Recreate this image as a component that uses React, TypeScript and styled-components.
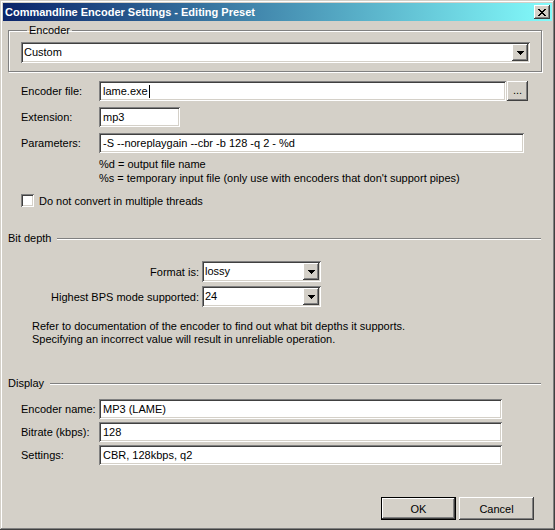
import React from 'react';
import styled, { createGlobalStyle, css } from 'styled-components';

const GlobalStyle = createGlobalStyle`
  html, body {
    margin: 0;
    padding: 0;
    background: #d4d0c8;
  }
  body {
    font-family: 'Liberation Sans', Arial, sans-serif;
    font-size: 11px;
    color: #000;
  }
  * {
    box-sizing: border-box;
  }
`;

const raised = css`
  background: #d4d0c8;
  box-shadow: inset -1px -1px #404040, inset 1px 1px #ffffff,
    inset -2px -2px #808080, inset 2px 2px #d4d0c8;
`;

const sunken = css`
  background: #ffffff;
  box-shadow: inset 1px 1px #808080, inset -1px -1px #ffffff,
    inset 2px 2px #404040, inset -2px -2px #d4d0c8;
`;

const Window = styled.div`
  width: 555px;
  height: 530px;
  padding: 3px;
  background: #d4d0c8;
  box-shadow: inset -1px -1px #404040, inset 1px 1px #d4d0c8,
    inset -2px -2px #808080, inset 2px 2px #ffffff;
  display: flex;
  flex-direction: column;
`;

const TitleBar = styled.div`
  height: 18px;
  display: flex;
  align-items: center;
  justify-content: space-between;
  padding: 0 2px 0 2px;
  background: linear-gradient(90deg, #0a246a 0%, #83fbfb 100%);
`;

const TitleText = styled.span`
  color: #ffffff;
  font-weight: bold;
  font-size: 11px;
  white-space: nowrap;
`;

const CloseButton = styled.div`
  ${raised};
  width: 16px;
  height: 14px;
  display: flex;
  align-items: center;
  justify-content: center;
`;

const Content = styled.div`
  flex: 1;
  display: flex;
  flex-direction: column;
  padding: 0 10px 0 5px;
`;

const GroupBox = styled.fieldset`
  margin: 3px 0 0 0;
  padding: 5px 11px 8px 12px;
  border: 1px solid #808080;
  box-shadow: inset 1px 1px #ffffff, 1px 1px #ffffff;
  min-width: 0;
`;

const Legend = styled.legend`
  margin-left: 6px;
  padding: 0 2px;
  line-height: 13px;
`;

const ComboBox = styled.div<{ $width?: number }>`
  ${sunken};
  height: 21px;
  width: ${p => (p.$width ? `${p.$width}px` : '100%')};
  padding: 2px;
  display: flex;
  align-items: center;
`;

const ComboValue = styled.span`
  flex: 1;
  padding-left: 1px;
  line-height: 17px;
  white-space: nowrap;
`;

const DropButton = styled.div`
  ${raised};
  width: 16px;
  height: 17px;
  display: flex;
  align-items: center;
  justify-content: center;
`;

const FieldRow = styled.div<{ $top: number }>`
  display: flex;
  align-items: center;
  margin-top: ${p => p.$top}px;
  padding-left: 12px;
`;

const FieldLabel = styled.span`
  width: 79px;
  padding-left: 1px;
  white-space: nowrap;
`;

const TextBox = styled.div<{ $width: number }>`
  ${sunken};
  width: ${p => p.$width}px;
  height: 20px;
  padding: 0 4px;
  display: flex;
  align-items: center;
  white-space: nowrap;
`;

const Caret = styled.span`
  display: inline-block;
  width: 1px;
  height: 13px;
  background: #000;
  margin-left: 1px;
`;

const BrowseButton = styled.div`
  ${raised};
  width: 21px;
  height: 20px;
  margin-left: 1px;
  display: flex;
  align-items: center;
  justify-content: center;
  padding-bottom: 3px;
`;

const HintBlock = styled.div<{ $top: number; $left: number; $lh: number }>`
  margin-top: ${p => p.$top}px;
  padding-left: ${p => p.$left}px;
  line-height: ${p => p.$lh}px;
  white-space: nowrap;
`;

const CheckRow = styled.label`
  display: flex;
  align-items: center;
  margin-top: 9px;
  padding-left: 13px;
`;

const CheckBox = styled.span`
  ${sunken};
  width: 13px;
  height: 13px;
  margin-right: 5px;
`;

const Separator = styled.div<{ $top: number }>`
  display: flex;
  align-items: center;
  margin-top: ${p => p.$top}px;
  height: 13px;
  margin-right: 1px;
`;

const SeparatorLabel = styled.span`
  padding-right: 6px;
  line-height: 13px;
`;

const SeparatorLine = styled.div`
  flex: 1;
  height: 2px;
  border-top: 1px solid #808080;
  border-bottom: 1px solid #ffffff;
`;

const BitRow = styled.div<{ $top: number }>`
  display: flex;
  align-items: center;
  margin-top: ${p => p.$top}px;
`;

const BitLabel = styled.span`
  width: 191px;
  text-align: right;
  margin-right: 3px;
  white-space: nowrap;
`;

const ButtonRow = styled.div`
  display: flex;
  justify-content: flex-end;
  gap: 3px;
  margin-top: 32px;
  margin-right: 8px;
`;

const Button = styled.div<{ $default?: boolean }>`
  width: 75px;
  height: 23px;
  display: flex;
  align-items: center;
  justify-content: center;
  background: #d4d0c8;
  ${p =>
    p.$default
      ? css`
          box-shadow: inset 0 0 0 1px #000000, inset -2px -2px #404040,
            inset 2px 2px #ffffff, inset -3px -3px #808080;
        `
      : css`
          box-shadow: inset -1px -1px #404040, inset 1px 1px #ffffff,
            inset -2px -2px #808080;
        `}
`;

const closeRows = ['11....11', '.11..11.', '..1111..', '...11...', '..1111..', '.11..11.', '11....11'];

const CloseGlyph = () => (
  <svg width="8" height="7" viewBox="0 0 8 7" shapeRendering="crispEdges">
    {closeRows.map((row, y) =>
      row.split('').map((c, x) =>
        c === '1' ? <rect key={`${x}-${y}`} x={x} y={y} width="1" height="1" fill="#000" /> : null
      )
    )}
  </svg>
);

const ArrowGlyph = () => (
  <svg width="7" height="4" viewBox="0 0 7 4" shapeRendering="crispEdges">
    <rect x="0" y="0" width="7" height="1" fill="#000" />
    <rect x="1" y="1" width="5" height="1" fill="#000" />
    <rect x="2" y="2" width="3" height="1" fill="#000" />
    <rect x="3" y="3" width="1" height="1" fill="#000" />
  </svg>
);

const Combo: React.FC<{ value: string; width?: number }> = ({ value, width }) => (
  <ComboBox $width={width}>
    <ComboValue>{value}</ComboValue>
    <DropButton>
      <ArrowGlyph />
    </DropButton>
  </ComboBox>
);

const App: React.FC = () => {
  return (
    <>
      <GlobalStyle />
      <Window>
        <TitleBar>
          <TitleText>Commandline Encoder Settings - Editing Preset</TitleText>
          <CloseButton>
            <CloseGlyph />
          </CloseButton>
        </TitleBar>

        <Content>
          <GroupBox>
            <Legend>Encoder</Legend>
            <Combo value="Custom" />
          </GroupBox>

          <FieldRow $top={9}>
            <FieldLabel>Encoder file:</FieldLabel>
            <TextBox $width={407}>
              lame.exe
              <Caret />
            </TextBox>
            <BrowseButton>...</BrowseButton>
          </FieldRow>
          <FieldRow $top={6}>
            <FieldLabel>Extension:</FieldLabel>
            <TextBox $width={81}>mp3</TextBox>
          </FieldRow>
          <FieldRow $top={6}>
            <FieldLabel>Parameters:</FieldLabel>
            <TextBox $width={425}>-S --noreplaygain --cbr -b 128 -q 2 - %d</TextBox>
          </FieldRow>

          <HintBlock $top={4} $left={91} $lh={14}>
            <div>%d = output file name</div>
            <div>%s = temporary input file (only use with encoders that don't support pipes)</div>
          </HintBlock>

          <CheckRow>
            <CheckBox />
            Do not convert in multiple threads
          </CheckRow>

          <Separator $top={25}>
            <SeparatorLabel>Bit depth</SeparatorLabel>
            <SeparatorLine />
          </Separator>

          <BitRow $top={16}>
            <BitLabel>Format is:</BitLabel>
            <Combo value="lossy" width={119} />
          </BitRow>
          <BitRow $top={4}>
            <BitLabel>Highest BPS mode supported:</BitLabel>
            <Combo value="24" width={119} />
          </BitRow>

          <HintBlock $top={13} $left={24} $lh={13}>
            <div>Refer to documentation of the encoder to find out what bit depths it supports.</div>
            <div>Specifying an incorrect value will result in unreliable operation.</div>
          </HintBlock>

          <Separator $top={31}>
            <SeparatorLabel>Display</SeparatorLabel>
            <SeparatorLine />
          </Separator>

          <FieldRow $top={9}>
            <FieldLabel>Encoder name:</FieldLabel>
            <TextBox $width={403}>MP3 (LAME)</TextBox>
          </FieldRow>
          <FieldRow $top={3}>
            <FieldLabel>Bitrate (kbps):</FieldLabel>
            <TextBox $width={403}>128</TextBox>
          </FieldRow>
          <FieldRow $top={3}>
            <FieldLabel>Settings:</FieldLabel>
            <TextBox $width={403}>CBR, 128kbps, q2</TextBox>
          </FieldRow>

          <ButtonRow>
            <Button $default>OK</Button>
            <Button>Cancel</Button>
          </ButtonRow>
        </Content>
      </Window>
    </>
  );
};

export default App;
